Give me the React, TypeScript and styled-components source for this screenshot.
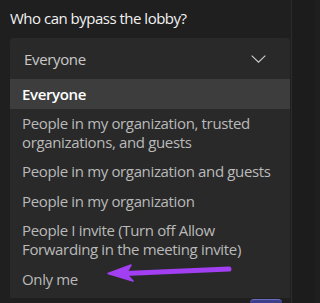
import React from "react";
import styled, { createGlobalStyle } from "styled-components";

const Global = createGlobalStyle`
  html, body { margin: 0; padding: 0; background: #1f1f1f; overflow: hidden; }
  body { font-family: "Open Sans", "Noto Sans", Arial, sans-serif; }
`;

const Page = styled.div`
  position: relative;
  display: flex;
  width: 315px;
  height: 303px;
  background: #1f1f1f;
  overflow: hidden;
`;

const Main = styled.div`
  width: 291px;
  padding: 8px 0 0 10px;
  box-sizing: border-box;
  display: flex;
  flex-direction: column;
`;

const Side = styled.div`
  flex: 1;
  background: #1c1c1c;
  border-left: 1px solid #2b2b2b;
`;

const Title = styled.div`
  color: #f2f2f2;
  font-size: 15px;
  line-height: 20px;
  height: 30px;
  flex: 0 0 30px;
  margin-bottom: 0;
  letter-spacing: -0.5px;
`;

const Dropdown = styled.div`
  width: 280px;
  margin-top: 0;
  display: flex;
  flex-direction: column;
`;

const Trigger = styled.div`
  height: 41px;
  background: #292929;
  border-radius: 4px 4px 0 0;
  display: flex;
  align-items: center;
  justify-content: space-between;
  padding: 0 24px 0 14px;
  box-sizing: border-box;
  color: #c9c9c9;
  font-size: 15px;
  letter-spacing: -0.35px;
`;

const List = styled.div`
  background: #292929;
  padding-bottom: 4px;
  display: flex;
  flex-direction: column;
`;

const Option = styled.div<{ $selected?: boolean }>`
  padding: ${(p) => (p.$selected ? "5.5px 12px 5px" : "5px 12px 5.5px")};
  line-height: 19px;
  font-size: 15px;
  letter-spacing: -0.35px;
  color: ${(p) => (p.$selected ? "#ffffff" : "#bababa")};
  font-weight: ${(p) => (p.$selected ? 600 : 400)};
  background: ${(p) => (p.$selected ? "#3d3d3d" : "transparent")};
`;

const Footer = styled.div`
  display: flex;
  justify-content: flex-end;
  width: 280px;
  padding-top: 1px;
`;

const PeekButton = styled.div`
  width: 32px;
  height: 10px;
  margin-right: 8px;
  border-radius: 4px 4px 0 0;
  background: #3e3f8a;
  border-top: 1px solid #6a6cc0;
`;

const Arrow = styled.svg`
  position: absolute;
  left: 95px;
  top: 255px;
  width: 145px;
  height: 40px;
`;

const Chevron = () => (
  <svg width="15" height="8" viewBox="0 0 15 8">
    <path d="M0.7 0.7 L7.5 7.2 L14.3 0.7" fill="none" stroke="#cfcfcf" strokeWidth="1.1" />
  </svg>
);

const options = [
  "People in my organization, trusted organizations, and guests",
  "People in my organization and guests",
  "People in my organization",
  "People I invite (Turn off Allow Forwarding in the meeting invite)",
  "Only me",
];

export default function App() {
  return (
    <>
      <Global />
      <Page>
        <Main>
          <Title>Who can bypass the lobby?</Title>
          <Dropdown>
            <Trigger>
              <span>Everyone</span>
              <Chevron />
            </Trigger>
            <List>
              <Option $selected>Everyone</Option>
              {options.map((o) => (
                <Option key={o}>{o}</Option>
              ))}
            </List>
          </Dropdown>
          <Footer>
            <PeekButton />
          </Footer>
        </Main>
        <Side />
        <Arrow viewBox="0 0 145 40">
          <line x1="30" y1="18.5" x2="134" y2="14" stroke="#a23ff2" strokeWidth="5" strokeLinecap="round" />
          <path d="M13 18.5 L36 10 L31 18.5 L38 26 Z" fill="#a23ff2" stroke="#a23ff2" strokeWidth="1.5" strokeLinejoin="round" />
        </Arrow>
      </Page>
    </>
  );
}
